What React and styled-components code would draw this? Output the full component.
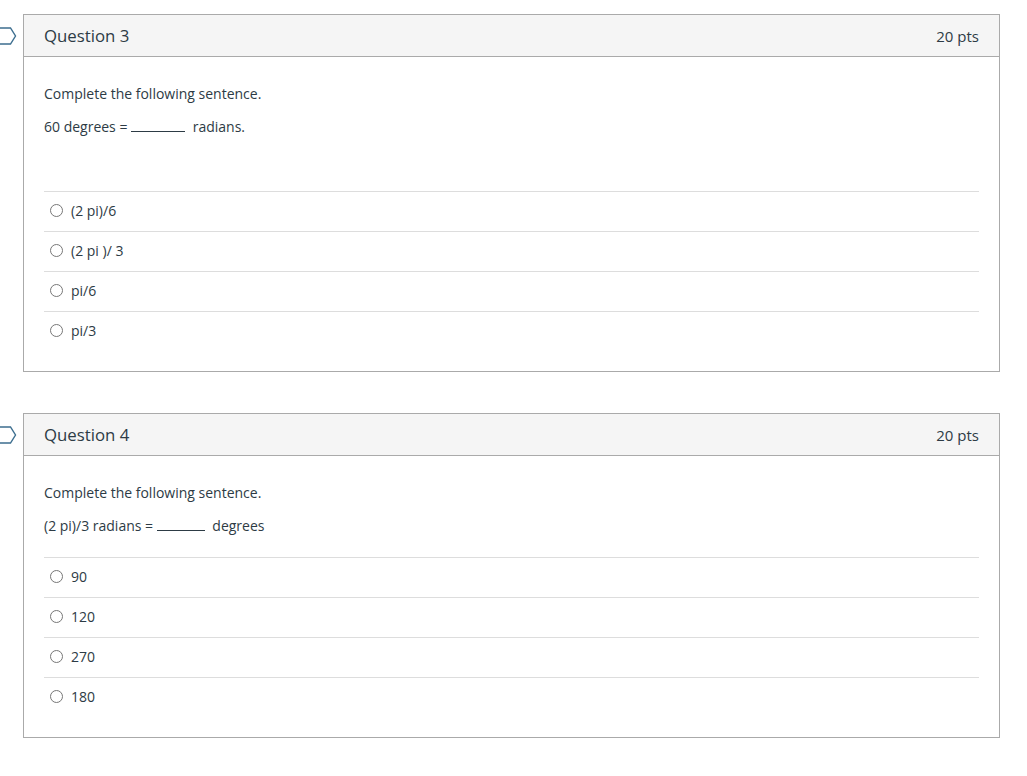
import React from "react";
import styled, { createGlobalStyle } from "styled-components";

const GlobalStyle = createGlobalStyle`
  html, body {
    margin: 0;
    padding: 0;
    background: #fff;
  }
  body {
    font-family: "Open Sans", "Liberation Sans", sans-serif;
    color: #2d3b45;
  }
`;

const questions = [
  {
    id: 3,
    points: 20,
    lead: "Complete the following sentence.",
    prompt: ["60 degrees = ", " radians."],
    blank: 54,
    gap: 54,
    answers: ["(2 pi)/6", "(2 pi )/ 3", "pi/6", "pi/3"],
  },
  {
    id: 4,
    points: 20,
    lead: "Complete the following sentence.",
    prompt: ["(2 pi)/3 radians = ", " degrees"],
    blank: 48,
    gap: 21,
    answers: ["90", "120", "270", "180"],
  },
];

const Question = ({ q }) => (
  <Card>
    <Flag viewBox="0 0 16 18" aria-hidden="true">
      <path d="M-4 1 H9.5 L14.5 9 L9.5 17 H-4" fill="none" stroke="#3c6e8f" strokeWidth="1.4" />
    </Flag>
    <Header>
      <Title>Question {q.id}</Title>
      <Points>{q.points} pts</Points>
    </Header>
    <Body>
      <Text>{q.lead}</Text>
      <Text>
        {q.prompt[0]}
        <Blank $width={q.blank} />
        {q.prompt[1]}
      </Text>
      <Answers $gap={q.gap}>
        {q.answers.map((a) => (
          <Answer key={a}>
            <Radio />
            <Label>{a}</Label>
          </Answer>
        ))}
      </Answers>
    </Body>
  </Card>
);

export default function App() {
  return (
    <>
      <GlobalStyle />
      <Page>
        {questions.map((q) => (
          <Question key={q.id} q={q} />
        ))}
      </Page>
    </>
  );
}

const Page = styled.div`
  padding: 14px 0 0 23px;
  display: flex;
  flex-direction: column;
  gap: 41px;
`;

const Card = styled.div`
  position: relative;
  width: 977px;
  box-sizing: border-box;
  border: 1px solid #aaaaaa;
`;

const Flag = styled.svg`
  position: absolute;
  left: -23px;
  top: 12px;
  width: 16px;
  height: 18px;
  overflow: visible;
`;

const Header = styled.div`
  height: 42px;
  box-sizing: border-box;
  background: #f5f5f5;
  border-bottom: 1px solid #aaaaaa;
  display: flex;
  align-items: center;
  justify-content: space-between;
  padding: 0 20px;
`;

const Title = styled.span`
  font-size: 16.8px;
  color: #2d3b45;
`;

const Points = styled.span`
  font-size: 15px;
  color: #2d3b45;
`;

const Body = styled.div`
  padding: 26px 20px 20px 20px;
`;

const Text = styled.p`
  margin: 0 0 12px;
  font-size: 14px;
  line-height: 21px;
  color: #2d3b45;
`;

const Blank = styled.span`
  display: inline-block;
  width: ${(p) => p.$width}px;
  height: 1px;
  margin: 0 4px 0 0;
  border-bottom: 1px solid #2d3b45;
  vertical-align: baseline;
`;

const Answers = styled.div`
  margin-top: ${(p) => p.$gap}px;
`;

const Answer = styled.div`
  height: 40px;
  box-sizing: border-box;
  border-top: 1px solid #dddddd;
  display: flex;
  align-items: center;
  padding: 0 0 3px 6px;
`;

const Radio = styled.span`
  width: 11px;
  height: 11px;
  border-radius: 50%;
  border: 1px solid #777;
  margin-right: 8px;
`;

const Label = styled.span`
  font-size: 14px;
  color: #2d3b45;
`;
